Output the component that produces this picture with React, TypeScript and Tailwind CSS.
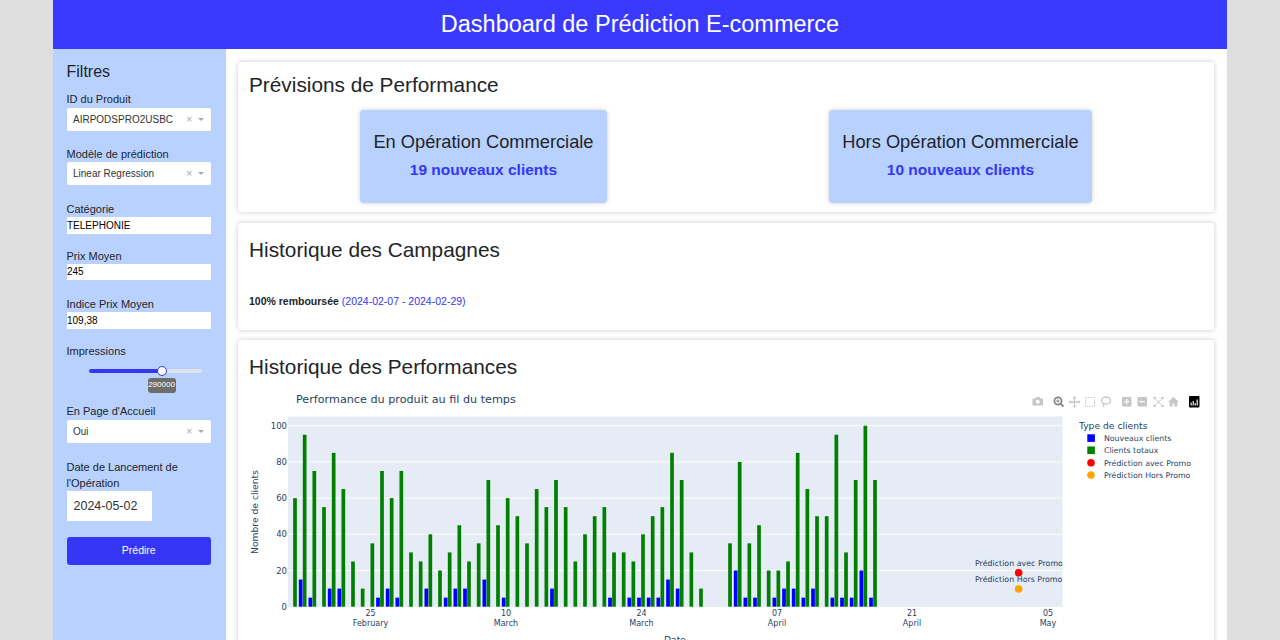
import React from "react";

const GREEN: (number | null)[] = [
  60, 95, 75, 55, 85, 65, 25, 10, 35, 75, 60, 75, 30, 25, 40, 20, 30, 45, 25, 35, 70, 45,
  60, 50, 35, 65, 55, 70, 55, 25, 40, 50, 55, 30, 30, 25, 40, 50, 55, 85, 70, 30, 10,
  null, null,
  35, 80, 35, 45, 20, 20, 25, 85, 65, 50, 50, 95, 30, 70, 100, 70,
];

const BLUE: Record<number, number> = {
  1: 15, 2: 5, 4: 10, 5: 10, 9: 5, 10: 10, 11: 5, 14: 10, 16: 5, 17: 10, 18: 10, 20: 15,
  22: 5, 27: 10, 33: 5, 35: 5, 36: 5, 37: 5, 38: 5, 39: 15, 40: 10, 46: 20, 47: 5, 48: 5,
  50: 5, 51: 10, 52: 10, 53: 5, 54: 10, 56: 5, 57: 5, 58: 5, 59: 20, 60: 5,
};

const X_TICKS = [
  { x: 370.5, day: "25", month: "February" },
  { x: 506, day: "10", month: "March" },
  { x: 641.5, day: "24", month: "March" },
  { x: 777, day: "07", month: "April" },
  { x: 912, day: "21", month: "April" },
  { x: 1048, day: "05", month: "May" },
];

const ZERO_Y = 606.7;
const UNIT = 1.81;
const AXIS = "#2a3f5f";
const CHART_FONT = "'DejaVu Sans', Verdana, sans-serif";

function Label({ children }: { children: React.ReactNode }) {
  return <label className="block text-[11px] leading-[16px] text-[#212529]">{children}</label>;
}

function Select({ value }: { value: string }) {
  return (
    <div className="mt-[0.5px] flex h-[23px] w-[144px] items-center rounded-[2px] bg-white pl-[6.5px] pr-[7px] text-[10px] text-[#333]">
      <span className="flex-1 truncate">{value}</span>
      <span className="mr-[5px] text-[11px] leading-none text-[#aaa]">×</span>
      <span className="h-0 w-0 border-x-[3.5px] border-t-[3.5px] border-x-transparent border-t-[#aaa]" />
    </div>
  );
}

function TextField({ value }: { value: string }) {
  return (
    <input
      readOnly
      value={value}
      className="block h-[16.5px] w-[144.5px] bg-white px-[0.5px] text-[10px] text-black outline-none"
    />
  );
}

function Card({ className, children }: { className: string; children: React.ReactNode }) {
  return (
    <section className={`rounded-[3px] bg-white px-[11px] shadow-[0_0_5px_rgba(0,0,0,0.22)] ${className}`}>
      {children}
    </section>
  );
}

function Kpi({ title, value }: { title: string; value: string }) {
  return (
    <div className="flex h-[93px] flex-col items-center rounded-[4px] bg-[#b8d1ff] px-[13.5px] pt-[19px] shadow-[0_0_4px_rgba(0,0,0,0.2)]">
      <div className="text-[18.25px] leading-[26px] text-[#212529]">{title}</div>
      <div className="mt-[2px] text-[15.5px] font-bold leading-[26px] text-[#3535f5]">{value}</div>
    </div>
  );
}

function ModeBar() {
  const dim = "#c6c6c6";
  return (
    <g>
      {/* camera */}
      <path d="M1032.5 398.5h3l1-1.5h3l1 1.5h2.5v7h-10.5z" fill={dim} />
      <circle cx="1037.7" cy="401.8" r="2" fill="#fff" />
      {/* zoom, active */}
      <circle cx="1058" cy="401" r="3.6" fill="none" stroke="#858585" strokeWidth="1.8" />
      <path d="M1060.5 403.6l3 3" stroke="#858585" strokeWidth="2" />
      <path d="M1056.2 401h3.6M1058 399.2v3.6" stroke="#858585" strokeWidth="0.9" />
      {/* pan */}
      <path d="M1074.5 397v10M1069.5 402h10" stroke={dim} strokeWidth="1.3" />
      <path d="M1074.5 396l-2 2h4zM1074.5 408l-2-2h4zM1068.5 402l2-2v4zM1080.5 402l-2-2v4z" fill={dim} />
      {/* box select */}
      <rect x="1085.5" y="397.5" width="9" height="9" fill="none" stroke={dim} strokeWidth="1" strokeDasharray="1.5 1.2" />
      {/* lasso */}
      <ellipse cx="1106" cy="400.5" rx="4.5" ry="3.5" fill="none" stroke={dim} strokeWidth="1.3" />
      <path d="M1103.5 403.5c0 1.5 1 2.5-.5 3.5" fill="none" stroke={dim} strokeWidth="1.2" />
      {/* zoom in / out */}
      <rect x="1122" y="397" width="9.5" height="9.5" rx="1" fill={dim} />
      <path d="M1124 401.7h5.5M1126.7 399v5.5" stroke="#fff" strokeWidth="1.3" />
      <rect x="1137.5" y="397" width="9.5" height="9.5" rx="1" fill={dim} />
      <path d="M1139.5 401.7h5.5" stroke="#fff" strokeWidth="1.3" />
      {/* autoscale */}
      <path d="M1154 397.5l9 9M1163 397.5l-9 9" stroke={dim} strokeWidth="1" />
      <path d="M1153.5 397h3l-3 3zM1163.5 397h-3l3 3zM1153.5 407h3l-3-3zM1163.5 407h-3l3-3z" fill={dim} />
      {/* home */}
      <path d="M1173.5 397l-5.5 5h1.7v4.5h2.8v-3h2v3h2.8V402h1.7z" fill={dim} />
      {/* plotly logo */}
      <rect x="1189" y="396" width="10.5" height="11.5" rx="1" fill="#000" />
      <path d="M1191.2 402.5v3M1193.2 401v4.5M1195.2 403v2.5M1197.2 399.5v6" stroke="#fff" strokeWidth="1.1" />
    </g>
  );
}

function Chart() {
  return (
    <svg viewBox="249 385 954 270" className="block h-[270px] w-[954px]" style={{ fontFamily: CHART_FONT }}>
      <defs>
        <clipPath id="plot-area">
          <rect x="288" y="416.5" width="774.5" height="190.5" />
        </clipPath>
      </defs>

      <text x="296" y="403" fontSize="11.2" fill={AXIS}>Performance du produit au fil du temps</text>
      <ModeBar />

      <rect x="288" y="416.5" width="774.5" height="190.5" fill="#e5ecf6" />
      {[20, 40, 60, 80, 100].map((v) => (
        <line key={v} x1="288" x2="1062.5" y1={ZERO_Y - v * UNIT} y2={ZERO_Y - v * UNIT} stroke="#fff" strokeWidth="1" />
      ))}

      {GREEN.map((v, i) =>
        v === null ? null : (
          <rect key={i} x={295 + i * 9.667 - 1.85} y={ZERO_Y - v * UNIT} width="3.7" height={v * UNIT} fill="#008000" />
        )
      )}
      {Object.entries(BLUE).map(([i, v]) => (
        <rect key={i} x={295 + Number(i) * 9.667 - 5.85} y={ZERO_Y - v * UNIT} width="3.7" height={v * UNIT} fill="#0000ff" />
      ))}

      <g clipPath="url(#plot-area)" fontSize="7.9" fill={AXIS}>
        <text x="975" y="565.5">Prédiction avec Promo</text>
        <text x="975" y="582">Prédiction Hors Promo</text>
      </g>
      <circle cx="1018.7" cy="572.7" r="3.8" fill="#ff0000" />
      <circle cx="1018.7" cy="589" r="3.8" fill="#ffa500" />

      {[0, 20, 40, 60, 80, 100].map((v) => (
        <text key={v} x="287" y={ZERO_Y - v * UNIT + 3} fontSize="8.5" textAnchor="end" fill={AXIS}>{v}</text>
      ))}
      <text transform="translate(257.5 512) rotate(-90)" fontSize="9.2" textAnchor="middle" fill={AXIS}>Nombre de clients</text>

      {X_TICKS.map((t) => (
        <g key={t.x} fontSize="8" textAnchor="middle" fill={AXIS}>
          <text x={t.x} y="616">{t.day}</text>
          <text x={t.x} y="626">{t.month}</text>
        </g>
      ))}
      <text x="675" y="643" fontSize="9.2" textAnchor="middle" fill={AXIS}>Date</text>

      <text x="1079" y="428.5" fontSize="9.2" fill={AXIS}>Type de clients</text>
      <rect x="1087.3" y="434.3" width="7.6" height="7.6" fill="#0000ff" />
      <rect x="1087.3" y="446.5" width="7.6" height="7.6" fill="#008000" />
      <circle cx="1091" cy="462.8" r="3.8" fill="#ff0000" />
      <circle cx="1091" cy="475" r="3.8" fill="#ffa500" />
      <g fontSize="7.8" fill={AXIS}>
        <text x="1104" y="441">Nouveaux clients</text>
        <text x="1104" y="453.2">Clients totaux</text>
        <text x="1104" y="465.5">Prédiction avec Promo</text>
        <text x="1104" y="478">Prédiction Hors Promo</text>
      </g>
    </svg>
  );
}

export default function App() {
  return (
    <div className="h-screen overflow-hidden bg-[#dedede] px-[53px] font-['Liberation_Sans',Arial,sans-serif]">
      <div className="flex h-full flex-col bg-white">
        <header className="flex h-[49px] shrink-0 items-center justify-center bg-[#3a3aff] text-[23.5px] text-white">
          Dashboard de Prédiction E-commerce
        </header>

        <div className="flex min-h-0 flex-1">
          <aside className="w-[173px] shrink-0 bg-[#b8d1ff] pl-[13.5px] pt-[13px]">
            <h2 className="text-[16px] leading-[20px] text-[#212529]">Filtres</h2>

            <div className="mt-[9px]">
              <Label>ID du Produit</Label>
              <Select value="AIRPODSPRO2USBC" />
            </div>
            <div className="mt-[15px]">
              <Label>Modèle de prédiction</Label>
              <Select value="Linear Regression" />
            </div>
            <div className="mt-[16px]">
              <Label>Catégorie</Label>
              <TextField value="TELEPHONIE" />
            </div>
            <div className="mt-[14px]">
              <Label>Prix Moyen</Label>
              <TextField value="245" />
            </div>
            <div className="mt-[16px]">
              <Label>Indice Prix Moyen</Label>
              <TextField value="109,38" />
            </div>

            <div className="mt-[14px]">
              <Label>Impressions</Label>
              <div className="relative h-[44px]">
                <div className="absolute left-[22px] top-[10px] h-[4px] w-[113px] rounded-full bg-[#dfe3ea]" />
                <div className="absolute left-[22px] top-[10px] h-[4px] w-[73px] rounded-full bg-[#3535f5]" />
                <div className="absolute left-[90px] top-[7px] h-[10px] w-[10px] rounded-full border-[1.5px] border-[#3535f5] bg-white" />
                <div className="absolute left-[81px] top-[19px] flex h-[15px] w-[28px] items-center justify-center rounded-[3px] bg-[#6d6d6d] text-[8px] text-white">
                  290000
                </div>
              </div>
            </div>

            <div>
              <Label>En Page d'Accueil</Label>
              <div className="pt-[1px]">
                <Select value="Oui" />
              </div>
            </div>

            <div className="mt-[16px]">
              <Label>
                Date de Lancement de
                <br />
                l'Opération
              </Label>
              <input
                readOnly
                value="2024-05-02"
                className="block h-[30px] w-[85px] bg-white pl-[7px] text-[12.5px] text-[#333] outline-none"
              />
            </div>

            <button className="mt-[16px] block h-[28px] w-[144.5px] rounded-[3px] bg-[#3535f5] text-[10.5px] text-white">
              Prédire
            </button>
          </aside>

          <main className="flex min-w-0 flex-1 flex-col overflow-hidden pl-[12px] pr-[13px] pt-[13px]">
            <Card className="h-[150px] shrink-0 pt-[10px]">
              <h2 className="text-[20.8px] leading-[26px] text-[#212529]">Prévisions de Performance</h2>
              <div className="mt-[12px] flex justify-around">
                <Kpi title="En Opération Commerciale" value="19 nouveaux clients" />
                <Kpi title="Hors Opération Commerciale" value="10 nouveaux clients" />
              </div>
            </Card>

            <Card className="mt-[11px] h-[107px] shrink-0 pt-[14px]">
              <h2 className="text-[20.8px] leading-[26px] text-[#212529]">Historique des Campagnes</h2>
              <p className="mt-[31px] text-[10.5px] leading-[14px] text-[#212529]">
                <b>100% remboursée</b> <span className="text-[#3535f5]">(2024-02-07 - 2024-02-29)</span>
              </p>
            </Card>

            <Card className="mt-[10px] shrink-0 pt-[14px]">
              <h2 className="text-[20.8px] leading-[26px] text-[#212529]">Historique des Performances</h2>
              <div className="mt-[5px]">
                <Chart />
              </div>
            </Card>
          </main>
        </div>
      </div>
    </div>
  );
}
